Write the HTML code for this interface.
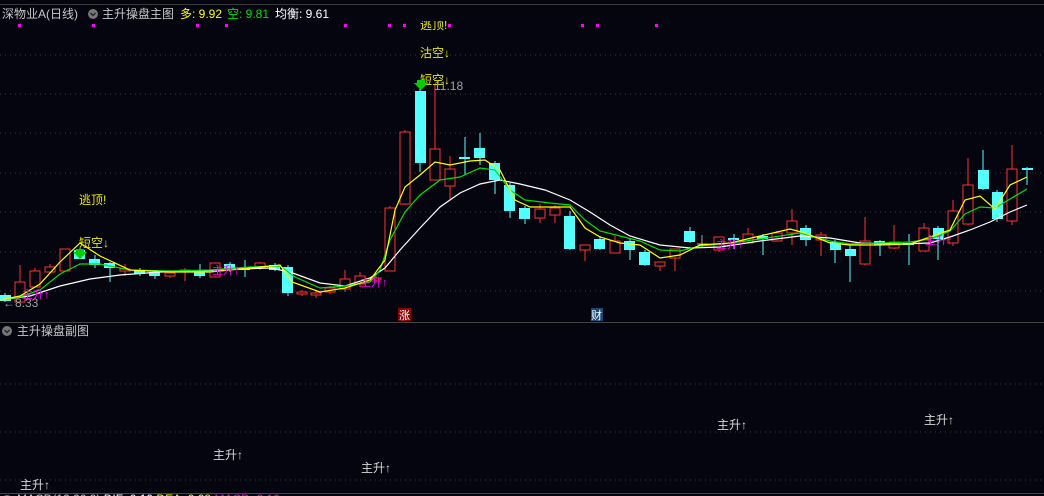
<!DOCTYPE html>
<html><head><meta charset="utf-8"><style>
html,body{margin:0;padding:0;background:#05050f;width:1044px;height:496px;overflow:hidden}
svg{display:block}
text{font-family:"Liberation Sans","Noto Sans CJK SC",sans-serif;font-size:12px}
.c{shape-rendering:crispEdges}
</style></head><body>
<svg width="1044" height="496" viewBox="0 0 1044 496" xmlns="http://www.w3.org/2000/svg">
<defs><clipPath id="mc"><rect x="0" y="21" width="1044" height="300"/></clipPath></defs>
<rect width="1044" height="496" fill="#05050f"/>
<line x1="0" y1="4.5" x2="1044" y2="4.5" stroke="#3a3a3a"/>
<g stroke="#3a3a3a" stroke-dasharray="1,4" class="c">
<line x1="0" y1="55" x2="1044" y2="55"/><line x1="0" y1="94" x2="1044" y2="94"/>
<line x1="0" y1="133" x2="1044" y2="133"/><line x1="0" y1="173" x2="1044" y2="173"/>
<line x1="0" y1="212" x2="1044" y2="212"/><line x1="0" y1="252" x2="1044" y2="252"/>
<line x1="0" y1="291" x2="1044" y2="291"/>
<line x1="0" y1="384" x2="1044" y2="384"/><line x1="0" y1="432" x2="1044" y2="432"/>
<line x1="0" y1="480" x2="1044" y2="480"/>
</g>
<line x1="0" y1="322.5" x2="1044" y2="322.5" stroke="#444"/>
<line x1="0" y1="493.5" x2="1044" y2="493.5" stroke="#444"/>

<!-- header -->
<text x="2" y="18" fill="#c8c8c8">深物业A(日线)</text>
<circle cx="93" cy="14" r="5" fill="#777"/><path d="M90.5 13l2.5 2.5 2.5-2.5" stroke="#222" fill="none" stroke-width="1.3"/>
<text x="102" y="18" fill="#c8c8c8">主升操盘主图</text>
<text x="180" y="18" fill="#ffff00">多: 9.92</text>
<text x="227" y="18" fill="#00e000">空: 9.81</text>
<text x="275" y="18" fill="#ffffff">均衡: 9.61</text>
<g fill="#ff00ff">
<rect x="18" y="24" width="3" height="3"/><rect x="92" y="24" width="3" height="3"/><rect x="196" y="24" width="3" height="3"/><rect x="225" y="24" width="3" height="3"/><rect x="344" y="24" width="3" height="3"/><rect x="388" y="24" width="3" height="3"/><rect x="403" y="24" width="3" height="3"/><rect x="448" y="24" width="3" height="3"/><rect x="581" y="24" width="3" height="3"/><rect x="596" y="24" width="3" height="3"/><rect x="655" y="24" width="3" height="3"/>
</g>

<g class="c">
<!-- wicks -->
<g stroke-width="1">
<g stroke="#ff3030">
<line x1="20" y1="265" x2="20" y2="302"/><line x1="35" y1="268" x2="35" y2="287"/><line x1="50" y1="264" x2="50" y2="273"/><line x1="65" y1="249" x2="65" y2="271"/>
<line x1="125" y1="264" x2="125" y2="276"/><line x1="170" y1="270" x2="170" y2="278"/><line x1="185" y1="268" x2="185" y2="281"/><line x1="215" y1="263" x2="215" y2="277"/><line x1="260" y1="262" x2="260" y2="270"/>
<line x1="302" y1="290" x2="302" y2="296"/><line x1="316" y1="290" x2="316" y2="298"/><line x1="330" y1="286" x2="330" y2="294"/><line x1="345" y1="270" x2="345" y2="292"/><line x1="360" y1="272" x2="360" y2="287"/><line x1="376" y1="276" x2="376" y2="282"/>
<line x1="390" y1="206" x2="390" y2="271"/><line x1="405" y1="130" x2="405" y2="205"/><line x1="435" y1="84" x2="435" y2="180"/><line x1="450" y1="156" x2="450" y2="200"/>
<line x1="540" y1="204" x2="540" y2="223"/><line x1="555" y1="205" x2="555" y2="223"/><line x1="585" y1="245" x2="585" y2="261"/><line x1="615" y1="236" x2="615" y2="253"/><line x1="660" y1="262" x2="660" y2="271"/><line x1="675" y1="249" x2="675" y2="271"/>
<line x1="719" y1="237" x2="719" y2="252"/><line x1="748" y1="228" x2="748" y2="243"/><line x1="777" y1="231" x2="777" y2="241"/><line x1="792" y1="209" x2="792" y2="245"/><line x1="821" y1="232" x2="821" y2="256"/><line x1="865" y1="217" x2="865" y2="265"/><line x1="894" y1="225" x2="894" y2="249"/><line x1="924" y1="223" x2="924" y2="251"/><line x1="953" y1="200" x2="953" y2="246"/><line x1="968" y1="158" x2="968" y2="225"/><line x1="1012" y1="145" x2="1012" y2="225"/>
</g>
<g stroke="#54ffff">
<line x1="5" y1="293" x2="5" y2="302"/><line x1="80" y1="248" x2="80" y2="259"/><line x1="95" y1="255" x2="95" y2="268"/><line x1="110" y1="262" x2="110" y2="282"/><line x1="140" y1="268" x2="140" y2="276"/><line x1="155" y1="270" x2="155" y2="279"/><line x1="200" y1="264" x2="200" y2="278"/><line x1="230" y1="262" x2="230" y2="272"/><line x1="245" y1="260" x2="245" y2="277"/><line x1="275" y1="263" x2="275" y2="271"/><line x1="288" y1="265" x2="288" y2="296"/>
<line x1="420" y1="88" x2="420" y2="172"/><line x1="465" y1="137" x2="465" y2="175"/><line x1="480" y1="133" x2="480" y2="165"/><line x1="495" y1="161" x2="495" y2="194"/><line x1="510" y1="183" x2="510" y2="218"/><line x1="525" y1="206" x2="525" y2="224"/><line x1="570" y1="211" x2="570" y2="250"/><line x1="600" y1="236" x2="600" y2="250"/><line x1="630" y1="239" x2="630" y2="260"/><line x1="645" y1="250" x2="645" y2="266"/><line x1="690" y1="227" x2="690" y2="243"/>
<line x1="734" y1="234" x2="734" y2="249"/><line x1="763" y1="234" x2="763" y2="255"/><line x1="806" y1="225" x2="806" y2="246"/><line x1="835" y1="240" x2="835" y2="263"/><line x1="850" y1="245" x2="850" y2="282"/><line x1="880" y1="240" x2="880" y2="256"/><line x1="909" y1="234" x2="909" y2="265"/><line x1="938" y1="226" x2="938" y2="260"/><line x1="983" y1="150" x2="983" y2="190"/><line x1="997" y1="190" x2="997" y2="222"/><line x1="1027" y1="167" x2="1027" y2="185"/>
</g>
<line x1="702" y1="235" x2="702" y2="247" stroke="#aaa"/>
</g>
<!-- red hollow bodies -->
<g fill="#05050f" stroke="#ff3030" stroke-width="1.2">
<rect x="15" y="282" width="10" height="20"/><rect x="30" y="271" width="10" height="16"/><rect x="45" y="267" width="10" height="5"/><rect x="60" y="249" width="10" height="22"/>
<rect x="120" y="269" width="10" height="2"/><rect x="165" y="273" width="10" height="3"/><rect x="180" y="270" width="10" height="2"/><rect x="210" y="263" width="10" height="14"/><rect x="255" y="263" width="10" height="5"/>
<rect x="297" y="292" width="10" height="2"/><rect x="311" y="293" width="10" height="2"/><rect x="325" y="288" width="10" height="4"/><rect x="340" y="279" width="10" height="10"/><rect x="355" y="276" width="10" height="8"/><rect x="371" y="278" width="10" height="2"/>
<rect x="385" y="208" width="10" height="63"/><rect x="400" y="132" width="10" height="72"/><rect x="430" y="149" width="10" height="31"/><rect x="445" y="169" width="10" height="17"/>
<rect x="535" y="209" width="10" height="9"/><rect x="550" y="208" width="10" height="7"/><rect x="580" y="245" width="10" height="5"/><rect x="610" y="241" width="10" height="12"/><rect x="655" y="262" width="10" height="4"/><rect x="670" y="249" width="10" height="9"/>
<rect x="714" y="237" width="10" height="13"/><rect x="743" y="234" width="10" height="9"/><rect x="772" y="233" width="10" height="8"/><rect x="787" y="221" width="10" height="12"/><rect x="816" y="235" width="10" height="5"/><rect x="860" y="241" width="10" height="23"/><rect x="889" y="242" width="10" height="6"/><rect x="919" y="228" width="10" height="23"/><rect x="948" y="211" width="10" height="32"/><rect x="963" y="185" width="10" height="39"/><rect x="1007" y="169" width="10" height="52"/>
</g>
<!-- cyan bodies -->
<g fill="#54ffff">
<rect x="0" y="295" width="11" height="6"/><rect x="74" y="250" width="11" height="9"/><rect x="89" y="259" width="11" height="6"/><rect x="104" y="263" width="11" height="5"/><rect x="134" y="270" width="11" height="4"/><rect x="149" y="272" width="11" height="4"/><rect x="194" y="270" width="11" height="6"/><rect x="224" y="264" width="11" height="6"/><rect x="239" y="268" width="11" height="2"/><rect x="269" y="265" width="11" height="5"/><rect x="282" y="267" width="11" height="26"/>
<rect x="415" y="91" width="11" height="72"/><rect x="459" y="157" width="11" height="2"/><rect x="474" y="148" width="11" height="10"/><rect x="489" y="163" width="11" height="17"/><rect x="504" y="185" width="11" height="26"/><rect x="519" y="208" width="11" height="11"/><rect x="564" y="216" width="11" height="33"/><rect x="594" y="239" width="11" height="10"/><rect x="624" y="241" width="11" height="9"/><rect x="639" y="252" width="11" height="13"/><rect x="684" y="231" width="11" height="11"/>
<rect x="728" y="238" width="11" height="2"/><rect x="757" y="236" width="11" height="3"/><rect x="800" y="228" width="11" height="12"/><rect x="830" y="242" width="11" height="8"/><rect x="845" y="249" width="11" height="7"/><rect x="874" y="241" width="11" height="4"/><rect x="903" y="243" width="11" height="2"/><rect x="933" y="228" width="11" height="11"/><rect x="978" y="170" width="11" height="19"/><rect x="992" y="192" width="11" height="27"/><rect x="1022" y="168" width="11" height="2"/>
</g>
<line x1="697" y1="244" x2="708" y2="244" stroke="#aaa"/>
</g>

<!-- MA lines -->
<polyline fill="none" stroke="#ffffff" stroke-width="1.2" points="0,300 30,296 60,286 90,279 120,275 160,272 200,271 240,269 270,268 290,272 320,283 345,286 370,278 385,268 400,250 420,228 440,207 460,193 480,184 500,180 520,184 545,190 570,200 590,212 610,225 630,236 660,245 690,248 720,247 760,241 800,236 830,238 860,243 900,244 930,243 950,237 970,230 990,222 1010,212 1027,205"/>
<polyline fill="none" stroke="#00e000" stroke-width="1.2" points="0,300 20,297 40,290 60,274 80,264 100,264 130,270 170,271 210,270 250,267 280,266 295,277 320,288 345,286 370,282 380,270 390,240 405,212 420,195 440,180 460,177 480,168 495,170 510,190 525,200 550,203 570,205 585,220 600,231 620,236 640,241 660,250 680,251 700,246 730,243 760,239 800,233 830,241 850,244 880,243 910,242 930,239 950,231 965,214 980,207 995,208 1010,199 1027,189"/>
<polyline fill="none" stroke="#ffff00" stroke-width="1.2" points="0,300 20,296 40,284 60,262 80,243 100,256 130,270 170,272 210,272 250,268 280,265 292,282 320,292 345,288 370,280 385,260 395,210 405,187 420,175 435,162 450,165 470,161 485,160 500,170 515,200 530,207 550,207 570,207 585,228 600,237 620,243 640,245 660,258 680,255 700,245 730,243 760,236 790,229 805,233 830,243 850,245 880,245 910,244 930,237 950,230 965,200 980,196 995,209 1010,185 1027,177"/>

<!-- signals -->
<g fill="#e8e800">
<text x="79" y="204">逃顶!</text>
<text x="79" y="247">短空↓</text>
<g clip-path="url(#mc)"><text x="420" y="29">逃顶!</text></g>
<text x="420" y="57">沽空↓</text>
<text x="420" y="84">短空↓</text>
</g>
<path d="M76 249h8v3h3l-7 7-7-7h3z" fill="#00d000"/>
<path d="M417 80h8v3h3l-7 7-7-7h3z" fill="#00d000"/>
<text x="434" y="90" fill="#a0a0a0">11.18</text>
<text x="3" y="307" fill="#a0a0a0">←8.33</text>
<g fill="#ff00ff">
<text x="22" y="298" style="font-size:11px">主升↑</text>
<text x="212" y="274" style="font-size:11px">主升↑</text>
<text x="360" y="286" style="font-size:11px">主升↑</text>
<text x="716" y="248" style="font-size:11px">主升↑</text>
<text x="925" y="244" style="font-size:11px">主升↑</text>
</g>
<rect x="398" y="308" width="13" height="13" fill="#8b0000"/>
<text x="399" y="319" fill="#fff" style="font-size:11px">涨</text>
<rect x="591" y="308" width="12" height="13" fill="#1a4a7a"/>
<text x="591" y="319" fill="#fff" style="font-size:11px">财</text>

<!-- sub panel -->
<circle cx="7" cy="331" r="5" fill="#777"/><path d="M4.5 330l2.5 2.5 2.5-2.5" stroke="#222" fill="none" stroke-width="1.3"/>
<text x="17" y="335" fill="#c8c8c8">主升操盘副图</text>
<g fill="#d8d8d8">
<text x="20" y="489">主升↑</text>
<text x="213" y="459">主升↑</text>
<text x="361" y="472">主升↑</text>
<text x="717" y="429">主升↑</text>
<text x="924" y="424">主升↑</text>
</g>
<circle cx="7" cy="500" r="5" fill="#777"/>
<text x="17" y="503" fill="#c8c8c8">MACD(12,26,9) <tspan fill="#fff">DIF: 0.10</tspan> <tspan fill="#ffff00">DEA: 0.08</tspan> <tspan fill="#ff00ff">MACD: 0.10</tspan></text>
</svg>
</body></html>
